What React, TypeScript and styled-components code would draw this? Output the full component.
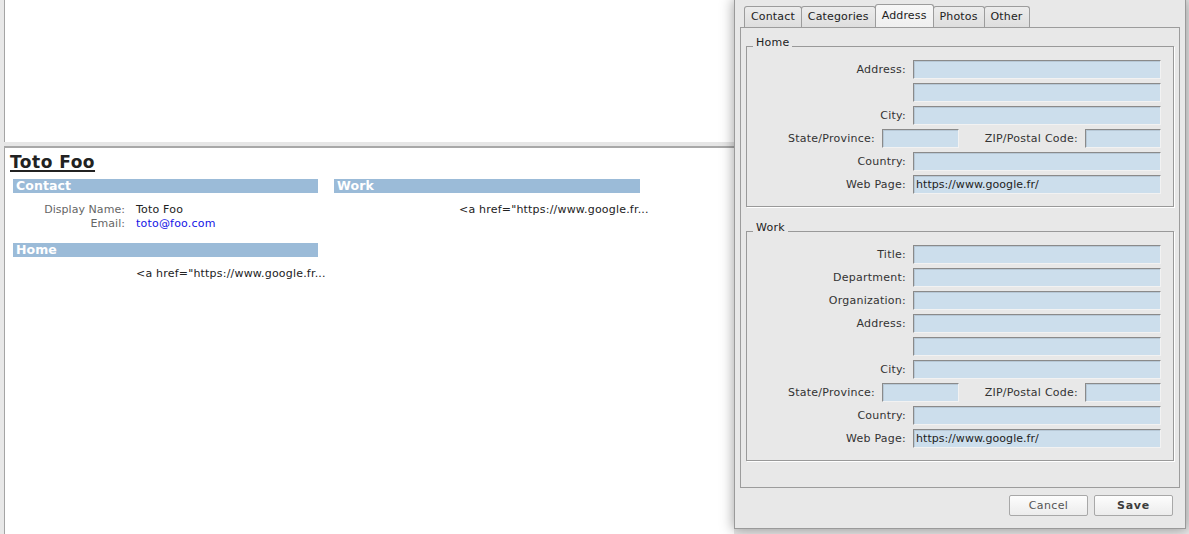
import React from 'react';
import styled, { createGlobalStyle } from 'styled-components';

const GlobalStyle = createGlobalStyle`
  html, body {
    margin: 0;
    padding: 0;
    background: #e8e8e8;
  }
  body {
    font-family: "DejaVu Sans", "Liberation Sans", sans-serif;
    font-size: 11px;
    letter-spacing: 0.2px;
    color: #222;
  }
  #root {
    width: 1189px;
    height: 534px;
    overflow: hidden;
  }
`;

const Desktop = styled.div`
  display: flex;
  width: 1189px;
  height: 534px;
  overflow: hidden;
  background: #e8e8e8;
`;

/* ---------- left: split pane with the contact view ---------- */

const SplitPane = styled.div`
  flex: none;
  width: 734px;
  display: flex;
  flex-direction: column;
  padding-left: 4px;
  box-sizing: border-box;
`;

const TopPanel = styled.div`
  height: 142px;
  flex: none;
  background: #fff;
  border-left: 1px solid #a4a4a4;
`;

const Divider = styled.div`
  height: 4px;
  flex: none;
  background: #e6e6e6;
  border-bottom: 2px solid #a8a8a8;
`;

const BottomPanel = styled.div`
  flex: 1;
  background: #fff;
  border-left: 1px solid #a4a4a4;
  padding: 4px 5px;
`;

const ContactName = styled.h1`
  margin: 0;
  font-size: 17px;
  line-height: 20px;
  font-weight: bold;
  letter-spacing: 0.5px;
  color: #222;
  text-decoration: underline;
  text-underline-offset: 2px;
  text-decoration-thickness: 1.5px;
`;

const Columns = styled.div`
  display: grid;
  grid-template-columns: 305px 306px;
  column-gap: 16px;
  margin: 7px 0 0 3px;
  align-items: start;
`;

const Column = styled.div`
  display: flex;
  flex-direction: column;
`;

const SectionBar = styled.div<{ $spaced?: boolean }>`
  height: 14px;
  line-height: 14px;
  background: #9bbbd8;
  color: #fff;
  font-weight: bold;
  font-size: 12.5px;
  letter-spacing: 0.1px;
  padding-left: 3px;
  margin-top: ${(p) => (p.$spaced ? '13px' : '0')};
`;

const InfoTable = styled.div<{ $indent?: number }>`
  display: grid;
  grid-template-columns: ${(p) => p.$indent ?? 112}px auto;
  column-gap: 11px;
  margin-top: 10px;
  line-height: 13.5px;
`;

const InfoLabel = styled.div`
  text-align: right;
  color: #666;
  letter-spacing: 0.05px;
`;

const InfoValue = styled.div`
  color: #222;
  white-space: nowrap;
`;

const InfoLink = styled.span`
  color: #1414e6;
`;

/* ---------- right: contact editor dialog ---------- */

const Dialog = styled.div`
  flex: none;
  width: 452px;
  height: 529px;
  box-sizing: border-box;
  background: #e8e8e8;
  border: 1px solid #9a9a9a;
  border-top: none;
  box-shadow: 0 0 12px 1px rgba(0, 0, 0, 0.35);
  padding: 4px 5px 0;
  display: flex;
  flex-direction: column;
  position: relative;
  z-index: 1;
  letter-spacing: 0.25px;
`;

const TabStrip = styled.div`
  display: flex;
  align-items: flex-end;
  height: 23px;
  padding-left: 4px;
`;

const Tab = styled.div<{ $active?: boolean }>`
  height: ${(p) => (p.$active ? '23px' : '21px')};
  box-sizing: border-box;
  padding: 0 6px 1px;
  display: flex;
  align-items: center;
  border: 1px solid #9c9c9c;
  border-bottom: none;
  border-radius: 3px 3px 0 0;
  margin-left: -1px;
  letter-spacing: 0.15px;
  background: ${(p) =>
    p.$active
      ? 'linear-gradient(#f7f7f7, #efefef)'
      : 'linear-gradient(#ececec, #dedede)'};
  color: #222;
  position: relative;
  z-index: ${(p) => (p.$active ? 1 : 0)};

  &:first-child {
    margin-left: 0;
  }
`;

const TabPanel = styled.div`
  height: 461px;
  box-sizing: border-box;
  border: 1px solid #9c9c9c;
  padding: 0 5px;
`;

const Group = styled.fieldset<{ $gap: number }>`
  margin: ${(p) => p.$gap}px 0 0;
  padding: 4px 12px 12px 6px;
  border: 1px solid #999;
  box-shadow: 1px 1px 0 #fff;
  min-inline-size: 0;
  display: flex;
  flex-direction: column;
  gap: 4px;
`;

const GroupTitle = styled.legend`
  padding: 0 3px 7px;
  line-height: 13px;
  color: #222;
`;

const FormRow = styled.div`
  display: flex;
  justify-content: flex-end;
  align-items: center;
  height: 19px;
`;

const FieldLabel = styled.label<{ $width?: number }>`
  color: #333;
  margin-right: 7px;
  text-align: right;
  white-space: nowrap;
  ${(p) => (p.$width ? `width: ${p.$width}px;` : '')}
`;

const Field = styled.div<{ $width?: number }>`
  width: ${(p) => p.$width ?? 248}px;
  height: 19px;
  box-sizing: border-box;
  background: #ccdeec;
  border-top: 1px solid #8a8a8a;
  border-left: 1px solid #8a8a8a;
  border-right: 1px solid #f2f2f2;
  border-bottom: 1px solid #f2f2f2;
  box-shadow: inset 1px 1px 0 #b7c8d6;
  padding: 0 2px;
  line-height: 17px;
  letter-spacing: 0.05px;
  color: #222;
  white-space: nowrap;
  overflow: hidden;
`;

const ButtonBar = styled.div`
  display: flex;
  justify-content: flex-end;
  gap: 6px;
  margin-top: 7px;
  padding-right: 7px;
`;

const Button = styled.button<{ $primary?: boolean }>`
  width: 79px;
  height: 21px;
  border: 1px solid #a8a8a8;
  border-radius: 2px;
  background: linear-gradient(#fdfdfd, #ececec);
  font-family: "DejaVu Sans", "Liberation Sans", sans-serif;
  font-size: 11px;
  font-weight: ${(p) => (p.$primary ? 'bold' : 'normal')};
  color: ${(p) => (p.$primary ? '#3c3c3c' : '#555')};
  letter-spacing: ${(p) => (p.$primary ? '0.7px' : '0.4px')};
  padding: 0;
`;

type RowSpec = { label?: string; value?: string };

const Row: React.FC<RowSpec> = ({ label, value }) => (
  <FormRow>
    {label && <FieldLabel>{label}</FieldLabel>}
    <Field>{value}</Field>
  </FormRow>
);

const StateRow: React.FC = () => (
  <FormRow>
    <FieldLabel>State/Province:</FieldLabel>
    <Field $width={77} />
    <FieldLabel $width={119}>ZIP/Postal Code:</FieldLabel>
    <Field $width={76} />
  </FormRow>
);

const WEB = 'https://www.google.fr/';
const LINK = '<a href="https://www.google.fr...';

const tabs = ['Contact', 'Categories', 'Address', 'Photos', 'Other'];

export default function App() {
  return (
    <>
      <GlobalStyle />
      <Desktop>
        <SplitPane>
          <TopPanel />
          <Divider />
          <BottomPanel>
            <ContactName>Toto Foo</ContactName>
            <Columns>
              <Column>
                <SectionBar>Contact</SectionBar>
                <InfoTable>
                  <InfoLabel>Display Name:</InfoLabel>
                  <InfoValue>Toto Foo</InfoValue>
                  <InfoLabel>Email:</InfoLabel>
                  <InfoValue>
                    <InfoLink>toto@foo.com</InfoLink>
                  </InfoValue>
                </InfoTable>
                <SectionBar $spaced>Home</SectionBar>
                <InfoTable>
                  <InfoLabel />
                  <InfoValue>{LINK}</InfoValue>
                </InfoTable>
              </Column>
              <Column>
                <SectionBar>Work</SectionBar>
                <InfoTable $indent={114}>
                  <InfoLabel />
                  <InfoValue>{LINK}</InfoValue>
                </InfoTable>
              </Column>
            </Columns>
          </BottomPanel>
        </SplitPane>

        <Dialog>
          <TabStrip>
            {tabs.map((t) => (
              <Tab key={t} $active={t === 'Address'}>
                {t}
              </Tab>
            ))}
          </TabStrip>
          <TabPanel>
            <Group $gap={8}>
              <GroupTitle>Home</GroupTitle>
              <Row label="Address:" />
              <Row />
              <Row label="City:" />
              <StateRow />
              <Row label="Country:" />
              <Row label="Web Page:" value={WEB} />
            </Group>
            <Group $gap={14}>
              <GroupTitle>Work</GroupTitle>
              <Row label="Title:" />
              <Row label="Department:" />
              <Row label="Organization:" />
              <Row label="Address:" />
              <Row />
              <Row label="City:" />
              <StateRow />
              <Row label="Country:" />
              <Row label="Web Page:" value={WEB} />
            </Group>
          </TabPanel>
          <ButtonBar>
            <Button>Cancel</Button>
            <Button $primary>Save</Button>
          </ButtonBar>
        </Dialog>
      </Desktop>
    </>
  );
}
